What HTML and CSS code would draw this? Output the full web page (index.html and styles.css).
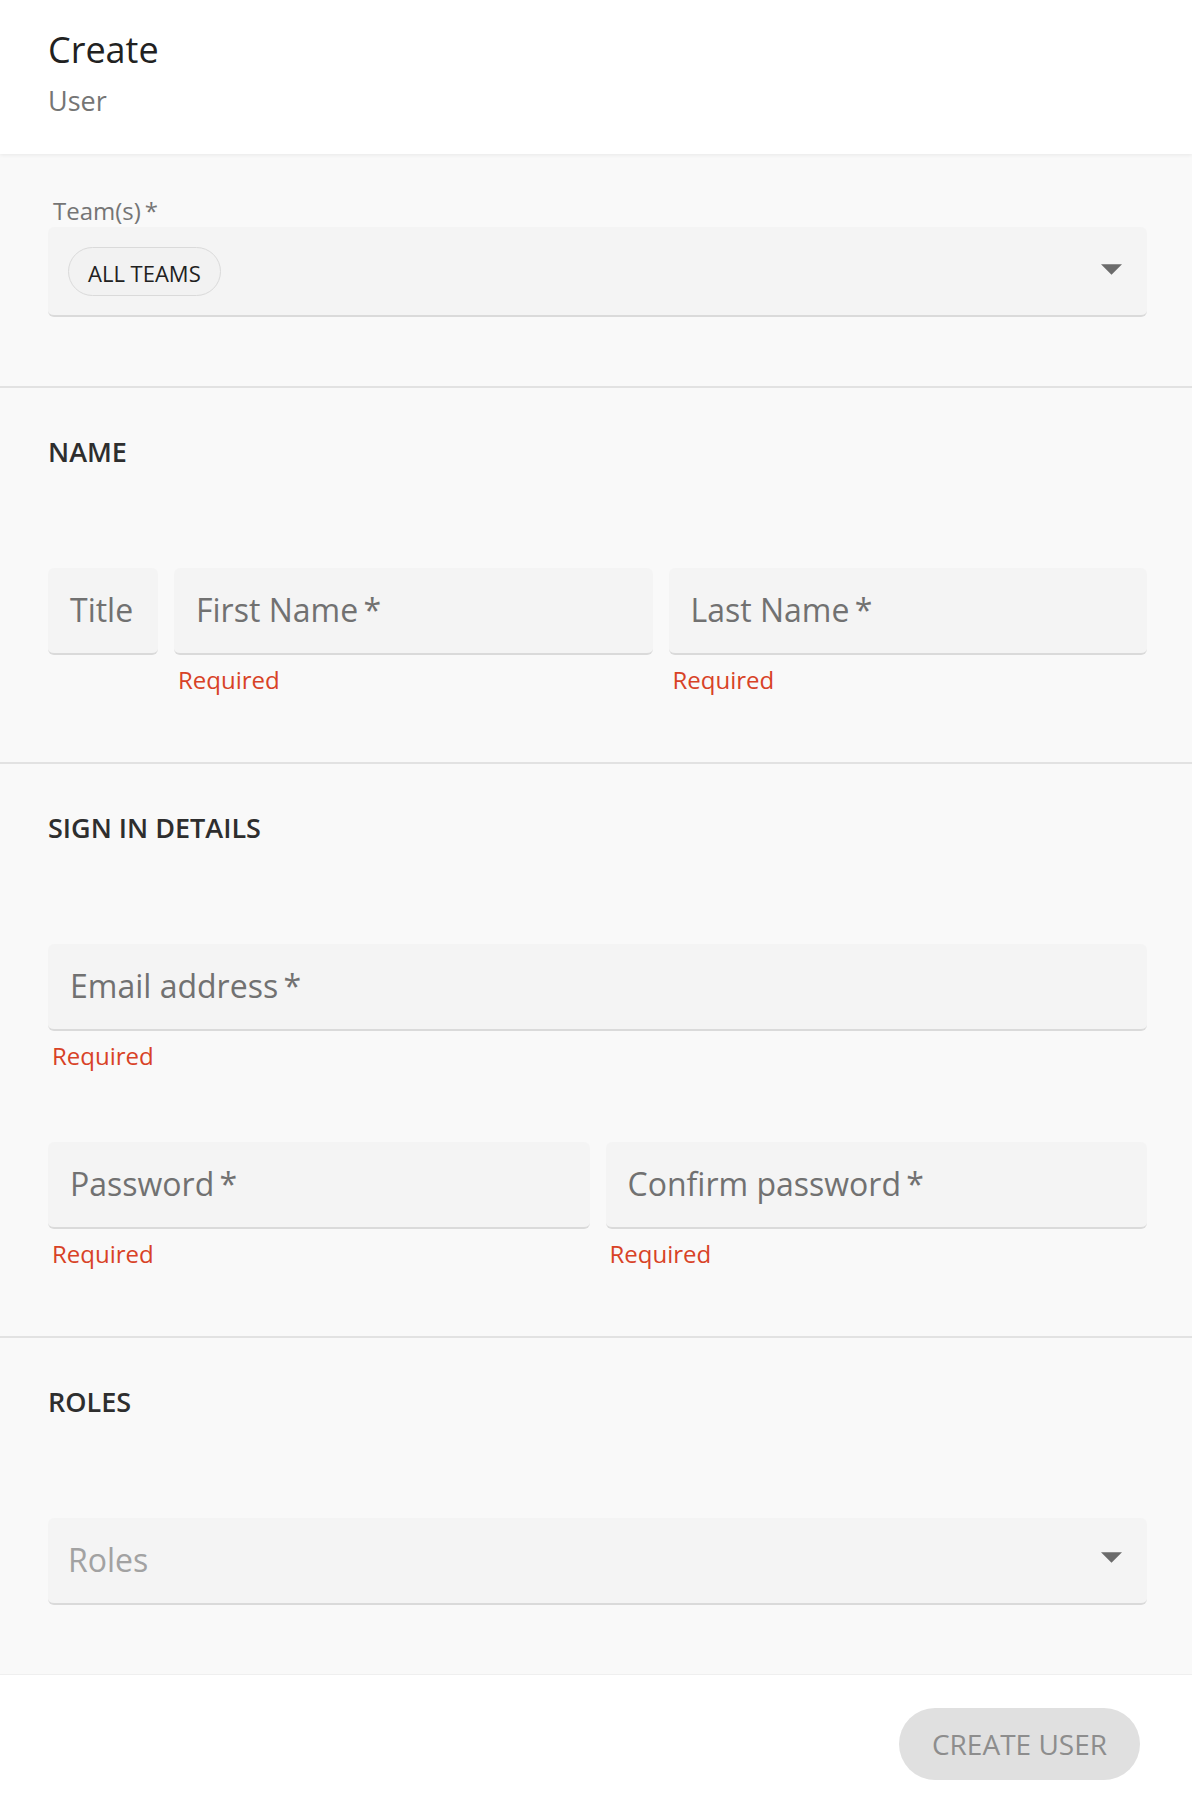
FILE: index.html
```html
<!DOCTYPE html>
<html lang="en">
<head>
    <meta charset="UTF-8">
    <meta name="viewport" content="width=device-width, initial-scale=1.0">
    <title>Create User</title>
    <link rel="stylesheet" href="styles.css">
</head>
<body>
    <header class="page-header">
        <h1 class="page-title">Create</h1>
        <div class="page-subtitle">User</div>
    </header>

    <form id="user-form">
        <section class="form-section teams-section">
            <label class="small-label">Team(s)&thinsp;*</label>
            <div class="field select-field teams-field">
                <span class="chip">ALL TEAMS</span>
                <svg class="drop-arrow" width="21" height="11" viewBox="0 0 10 5"><polygon points="0,0 10,0 5,5" fill="#6b6b6b"/></svg>
            </div>
        </section>

        <section class="form-section">
            <h2 class="section-title">NAME</h2>
            <div class="row name-row">
                <div class="field-wrap">
                    <div class="field"><span class="placeholder">Title</span></div>
                </div>
                <div class="field-wrap">
                    <div class="field"><span class="placeholder">First Name&thinsp;*</span></div>
                    <div class="helper">Required</div>
                </div>
                <div class="field-wrap">
                    <div class="field"><span class="placeholder">Last Name&thinsp;*</span></div>
                    <div class="helper">Required</div>
                </div>
            </div>
        </section>

        <section class="form-section">
            <h2 class="section-title">SIGN IN DETAILS</h2>
            <div class="field-wrap">
                <div class="field"><span class="placeholder">Email address&thinsp;*</span></div>
                <div class="helper">Required</div>
            </div>
            <div class="row password-row">
                <div class="field-wrap">
                    <div class="field"><span class="placeholder">Password&thinsp;*</span></div>
                    <div class="helper">Required</div>
                </div>
                <div class="field-wrap">
                    <div class="field"><span class="placeholder">Confirm password&thinsp;*</span></div>
                    <div class="helper">Required</div>
                </div>
            </div>
        </section>

        <section class="form-section roles-section">
            <h2 class="section-title">ROLES</h2>
            <div class="field select-field roles-field">
                <span class="placeholder light">Roles</span>
                <svg class="drop-arrow" width="21" height="11" viewBox="0 0 10 5"><polygon points="0,0 10,0 5,5" fill="#6b6b6b"/></svg>
            </div>
        </section>
    </form>

    <footer class="page-footer">
        <button type="button" class="create-btn" disabled>CREATE USER</button>
    </footer>
</body>
</html>
```

FILE: styles.css
```css
body {
    margin: 0;
    background-color: #f9f9f9;
    font-family: "Open Sans", "Noto Sans", sans-serif;
    color: #212121;
}

.page-header {
    position: relative;
    background-color: #fff;
    padding: 26px 45px 35px 48px;
    box-shadow: 0 1px 4px rgba(0, 0, 0, 0.07);
}

.page-title {
    margin: 0;
    font-size: 36px;
    font-weight: 400;
    line-height: 48px;
}

.page-subtitle {
    margin-top: 9px;
    font-size: 27px;
    line-height: 36px;
    color: #757575;
}

.form-section {
    padding: 46px 45px 66px 48px;
    border-bottom: 2px solid #e2e2e2;
}

.teams-section {
    padding-top: 41px;
    padding-bottom: 69px;
}

.roles-section {
    border-bottom: none;
    padding-bottom: 69px;
}

.small-label {
    display: block;
    margin-left: 5px;
    font-size: 24px;
    line-height: 32px;
    color: #757575;
}

.section-title {
    margin: 0 0 98px;
    font-size: 27px;
    font-weight: 600;
    line-height: 36px;
    color: #2e2e2e;
}

.row {
    display: grid;
    gap: 16px;
}

.name-row {
    grid-template-columns: 110px 1fr 1fr;
}

.password-row {
    grid-template-columns: 1fr 1fr;
    margin-top: 70px;
}

.field {
    display: flex;
    align-items: center;
    box-sizing: border-box;
    height: 87px;
    padding: 0 22px 2px;
    background-color: #f4f4f4;
    border-bottom: 2px solid #dadada;
    border-radius: 6px;
}

.placeholder {
    font-size: 32px;
    line-height: 44px;
    color: #717171;
    white-space: nowrap;
}

.placeholder.light {
    color: #a2a2a2;
}

.select-field {
    padding-right: 25px;
}

.roles-field {
    padding-left: 20px;
}

.teams-field {
    height: 90px;
    padding-top: 3px;
    padding-left: 20px;
}

.drop-arrow {
    margin-left: auto;
    margin-bottom: 4px;
}

.chip {
    display: inline-flex;
    align-items: center;
    box-sizing: border-box;
    height: 49px;
    padding: 3px 19px 0;
    border: 1px solid #dadada;
    border-radius: 25px;
    background-color: #f2f2f2;
    font-size: 22px;
    color: #212121;
}

.helper {
    margin: 9px 0 0 4px;
    font-size: 24px;
    line-height: 32px;
    color: #d84226;
}

.page-footer {
    display: flex;
    justify-content: flex-end;
    padding: 33px 52px 28px;
    background-color: #fff;
    border-top: 1px solid #efefef;
}

.create-btn {
    height: 72px;
    padding: 0 33px;
    border: none;
    border-radius: 36px;
    background-color: #e0e0e0;
    color: #8d8d8d;
    font-family: inherit;
    font-size: 28px;
}
```
